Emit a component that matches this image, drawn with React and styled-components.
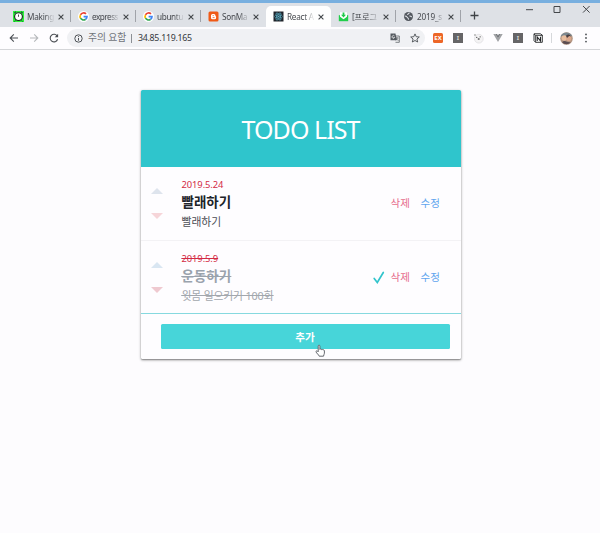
import React from "react";
import styled, { createGlobalStyle } from "styled-components";

const GlobalStyle = createGlobalStyle`
  * { box-sizing: border-box; }
  body {
    margin: 0;
    background: #fdfcfe;
    font-family: "Noto Sans", "Noto Sans CJK KR", sans-serif;
    overflow: hidden;
  }
`;

const Window = styled.div`
  width: 600px;
  height: 533px;
  display: flex;
  flex-direction: column;
`;

const TabStrip = styled.div`
  flex: none;
  height: 27px;
  display: flex;
  padding-left: 6px;
  border-top: 3px solid #78afdf;
  background: #dee1e6;
`;

const Tab = styled.div`
  width: 65px;
  height: 21px;
  margin-top: 3px;
  padding: 0 6px 0 7px;
  display: flex;
  align-items: center;
  border-radius: 5px 5px 0 0;
  background: ${(p) => (p.$active ? "#fefefe" : "transparent")};
`;

const TabIcon = styled.svg`
  flex: none;
  width: 11px;
  height: 11px;
`;

const TabLabel = styled.span`
  width: 28px;
  margin-left: 3px;
  flex: none;
  white-space: nowrap;
  font-size: 8.2px;
  line-height: 14px;
  letter-spacing: ${(p) => p.$tracking || "-0.4px"};
  color: #45484d;
  mask-image: linear-gradient(90deg, #000 60%, rgba(0, 0, 0, 0.15) 92%);
`;

const CloseIcon = styled.svg`
  width: 6px;
  height: 6px;
  margin-left: 3px;
  flex: none;
`;

const Divider = styled.span`
  flex: none;
  width: 1px;
  height: 12px;
  margin: 7px 0 0 -1px;
  background: ${(p) => (p.$hidden ? "transparent" : "#a0a3a9")};
`;

const NewTab = styled.svg`
  width: 9px;
  height: 9px;
  margin: 8px 0 0 9px;
`;

const WindowControls = styled.div`
  display: flex;
  margin-left: auto;
  height: 12px;
`;

const ControlIcon = styled.svg`
  width: 28.5px;
  height: 12px;
`;

const Toolbar = styled.div`
  flex: none;
  height: 23px;
  display: flex;
  align-items: center;
  padding-left: 4px;
  background: #fefdff;
  border-bottom: 1px solid #d5d6d9;
`;

const ToolCell = styled.span`
  width: 20px;
  height: 20px;
  display: flex;
  align-items: center;
  justify-content: center;
  flex: none;
`;

const AddressBar = styled.div`
  width: 358px;
  height: 18px;
  margin: 0 3px 0 3px;
  padding-left: 7px;
  display: flex;
  align-items: center;
  border-radius: 9px;
  background: #f0f1f4;
  font-size: 8.8px;
  line-height: 14px;
  color: #35383d;
`;

const Warning = styled.span`
  width: 38px;
  margin-left: 5px;
  font-size: 9.8px;
  letter-spacing: -0.1px;
  white-space: nowrap;
  color: #70747a;
`;

const Pipe = styled.span`
  width: 1px;
  height: 9px;
  margin: 0 6px 0 5px;
  background: #8b8f94;
`;

const Address = styled.span`
  letter-spacing: -0.27px;
  flex: 1;
`;

const Extension = styled.span`
  width: 10px;
  height: 10px;
  display: flex;
  align-items: center;
  justify-content: center;
  border-radius: ${(p) => (p.$round ? "1.5px" : "0")};
  background: ${(p) => p.$color};
  color: ${(p) => (p.$round ? "#fff" : "#d5d5d5")};
  font: 700 6px/10px "Noto Sans", sans-serif;
`;

const Separator = styled.span`
  width: 1px;
  height: 10px;
  margin: 0 4px 0 3px;
  background: #d6d8db;
`;

const Page = styled.main`
  flex: 1;
  display: flex;
  justify-content: center;
  align-items: flex-start;
  padding: 40px 0 0 1px;
`;

const Card = styled.section`
  width: 320px;
  height: 268.5px;
  border-radius: 1.5px;
  overflow: visible;
  background: #fefdff;
  box-shadow: 0 1px 3px rgba(0, 0, 0, 0.32), 0 1px 1.5px rgba(0, 0, 0, 0.3);
`;

const CardHeader = styled.h1`
  margin: 0;
  height: 77px;
  display: flex;
  align-items: center;
  justify-content: center;
  border-radius: 1.5px 1.5px 0 0;
  background: #2fc5cc;
  color: #fff;
  font: 400 25px/34px "Noto Sans", sans-serif;
  letter-spacing: -0.95px;
`;

const TodoList = styled.div`
  height: 147px;
  border-bottom: 1px solid #86d9df;
`;

const TodoRow = styled.article`
  height: 74px;
  display: flex;
  align-items: flex-start;
  padding: 0 20px 0 10px;

  & + & {
    height: 72px;
  }
  &:first-child {
    border-bottom: 1px solid #f3f2f5;
  }
`;

const Sorter = styled.div`
  width: 31px;
  padding-top: 21px;
  display: flex;
  flex-direction: column;
  gap: 19px;
`;

const Arrow = styled.svg`
  display: block;
  width: 12px;
  height: 6px;
`;

const TodoBody = styled.div`
  flex: 1;
  padding-top: 11px;
  text-decoration: ${(p) => (p.$done ? "line-through" : "none")};
  color: ${(p) => (p.$done ? "#9aa3ad" : "#20242a")};
`;

const TodoDate = styled.div`
  height: 14px;
  font-size: 9.4px;
  line-height: 14px;
  letter-spacing: -0.08px;
  color: #d32a45;
  text-decoration: inherit;
`;

const TodoTitle = styled.div`
  height: 21px;
  font-size: 13.5px;
  line-height: 20px;
  font-weight: 700;
  text-decoration: inherit;
`;

const TodoText = styled.div`
  height: 18px;
  font-size: 10.8px;
  line-height: 18px;
  letter-spacing: ${(p) => (p.$done ? "-0.15px" : "0")};
  color: ${(p) => (p.$done ? "#a2a7ad" : "#4c4e55")};
  text-decoration: inherit;
`;

const Actions = styled.div`
  display: flex;
  align-items: center;
  padding-top: 27px;
  font-size: 10.5px;
  line-height: 18px;
`;

const Check = styled.svg`
  width: 12px;
  height: 13px;
  margin: 0 6px 0 0;
`;

const Action = styled.span`
  width: 20px;
  margin-left: ${(p) => (p.$edit ? "10px" : "0")};
  color: ${(p) => (p.$edit ? "#61a5ee" : "#e66c8c")};
  white-space: nowrap;
`;

const CardFooter = styled.div`
  padding: 10px 10px 0 20px;
`;

const AddButton = styled.button`
  display: block;
  position: relative;
  width: 289px;
  height: 25px;
  padding: 0;
  border: 0;
  border-radius: 1.5px;
  background: #47d5d9;
  color: #fff;
  font: 700 10.6px/24px "Noto Sans CJK KR", sans-serif;
  text-align: center;
`;

const Pointer = styled.svg`
  position: absolute;
  left: 154px;
  top: 20px;
  width: 11px;
  height: 14px;
`;

const GoogleMark = () => (
  <>
    <circle cx="5.5" cy="5.5" r="5.5" fill="#fff" />
    <g fill="none" strokeWidth="1.7">
      <path d="M8 2.9A3.5 3.5 0 0 0 2.5 3.8" stroke="#ea4335" />
      <path d="M2.5 3.8A3.5 3.5 0 0 0 2.5 7.2" stroke="#fbbc05" />
      <path d="M2.5 7.2A3.5 3.5 0 0 0 7.6 8.3" stroke="#34a853" />
      <path d="M7.6 8.3A3.5 3.5 0 0 0 9 5.6H5.6" stroke="#4285f4" />
    </g>
  </>
);

const marks = {
  clock: (
    <>
      <path d="M0 0h11v11H0z" fill="#2cf238" />
      <path d="M1.2 2 3 .8M9.8 2 8 .8M2.4 9.5l-.8 1M8.6 9.5l.8 1" stroke="#123" strokeWidth="1" />
      <circle cx="5.5" cy="5.6" r="3.9" fill="#fff" stroke="#17251b" strokeWidth="1.1" />
      <path d="M5.5 3.5v2.3" stroke="#222" strokeWidth=".8" />
    </>
  ),
  google: <GoogleMark />,
  blogger: (
    <>
      <rect x=".5" y=".5" width="10" height="10" rx="1.5" fill="#f05a16" />
      <path d="M3 4.5a1.6 1.6 0 0 1 1.6-1.6h1.2c1.2 0 1.7.8 1.7 1.9 0 .5.6.4.6 1v.9a1.6 1.6 0 0 1-1.6 1.6H4.6A1.6 1.6 0 0 1 3 6.7z" fill="#fff" />
      <path d="M4.6 4.6h1.2M4.6 6.6h2" stroke="#f05a16" strokeWidth=".8" />
    </>
  ),
  react: (
    <>
      <path d="M.5.5h10v10H.5z" fill="#20242b" />
      <g fill="none" stroke="#5bb5cd" strokeWidth=".6">
        <ellipse cx="5.5" cy="5.5" rx="4.1" ry="1.6" />
        <ellipse cx="5.5" cy="5.5" rx="4.1" ry="1.6" transform="rotate(60 5.5 5.5)" />
        <ellipse cx="5.5" cy="5.5" rx="4.1" ry="1.6" transform="rotate(120 5.5 5.5)" />
      </g>
      <circle cx="5.5" cy="5.5" r=".8" fill="#5bb5cd" />
    </>
  ),
  mail: (
    <>
      <path d="M.8 4.2h9.4v6H.8z" fill="#21ce4b" />
      <path d="M2 1.200h7v4.600L5.500 8.300 2 5.800z" fill="#fff" />
      <path d="M4.600 1.500h1.800v2.200h1.600L5.500 6.400 3 3.700h1.600z" fill="#20c94b" />
    </>
  ),
  globe: (
    <>
      <circle cx="5.5" cy="5.5" r="4.5" fill="#52575e" />
      <path d="M1.7 5c1.4 0 2 .4 2.5 1.2S5.7 7 5.500 8.600M6.400 1.700c-.2 1.400-1.800.8-1.800 2.200M6.500 4.900c1 .1 1.300 1 2.500.8" fill="none" stroke="#dee1e6" strokeWidth="1.1" />
    </>
  ),
};

const tabs = [
  { mark: "clock", label: "Making", tracking: "-0.25px" },
  { mark: "google", label: "express", tracking: "-0.5px" },
  { mark: "google", label: "ubuntu", tracking: "-0.35px" },
  { mark: "blogger", label: "SonMa", noDivider: true, tracking: "-0.25px" },
  { mark: "react", label: "React A", active: true, noDivider: true, tracking: "-0.25px" },
  { mark: "mail", label: "[프로그", tracking: "-0.1px" },
  { mark: "globe", label: "2019_s", tracking: "-0.2px" },
];

const todos = [
  { date: "2019.5.24", title: "빨래하기", text: "빨래하기", done: false },
  { date: "2019.5.9", title: "운동하기", text: "윗몸 일으키기 100회", done: true },
];

const ToolIcon = ({ size = 10, children }) => (
  <svg width={size} height={size} viewBox="0 0 10 10" fill="none" stroke="#4b4f54" strokeWidth="1.1">
    {children}
  </svg>
);

function Tabs() {
  return (
    <TabStrip>
      {tabs.map((t, i) => (
        <React.Fragment key={i}>
          <Tab $active={t.active}>
            <TabIcon viewBox="0 0 11 11">{marks[t.mark]}</TabIcon>
            <TabLabel $tracking={t.tracking}>{t.label}</TabLabel>
            <CloseIcon viewBox="0 0 6 6">
              <path d="M.6.6l4.8 4.8M5.4.6.6 5.4" stroke="#414549" strokeWidth="1.1" />
            </CloseIcon>
          </Tab>
          <Divider $hidden={t.noDivider} />
        </React.Fragment>
      ))}
      <NewTab viewBox="0 0 9 9">
        <path d="M4.5.5v8M.5 4.5h8" stroke="#3f4347" strokeWidth="1.3" />
      </NewTab>
      <WindowControls>
        <ControlIcon viewBox="0 0 28.5 12"><path d="M11 6.7h7" stroke="#44474b" /></ControlIcon>
        <ControlIcon viewBox="0 0 28.5 12"><path d="M11 3.5h6v6h-6z" fill="none" stroke="#44474b" /></ControlIcon>
        <ControlIcon viewBox="0 0 28.5 12"><path d="m11 3 6.6 6.6m0-6.6L11 9.6" stroke="#44474b" /></ControlIcon>
      </WindowControls>
    </TabStrip>
  );
}

function BrowserToolbar() {
  return (
    <Toolbar>
      <ToolCell><ToolIcon><path d="M9 5H1.3M4.8 1.4 1.2 5l3.6 3.6" /></ToolIcon></ToolCell>
      <ToolCell><ToolIcon><path d="M1 5h7.7M5.2 1.4 8.8 5 5.2 8.6" stroke="#b5b8bb" /></ToolIcon></ToolCell>
      <ToolCell>
        <ToolIcon>
          <path d="M8.3 3.2A3.8 3.8 0 1 0 8.6 6.3" />
          <path d="M9.1.8v3.4H5.7z" fill="#4b4f54" stroke="none" />
        </ToolIcon>
      </ToolCell>
      <AddressBar>
        <ToolIcon size={9}>
          <circle cx="5" cy="5" r="4.1" />
          <path d="M5 4.4v3M5 2.4v1" />
        </ToolIcon>
        <Warning>주의 요함</Warning>
        <Pipe />
        <Address>34.85.119.165</Address>
        <ToolCell>
          <ToolIcon>
            <path d="M.5.5h5l1.2 6.7H.5z" fill="#555a60" stroke="none" />
            <path d="M4.5 3h4.8v6.3H5.5" strokeWidth=".7" />
            <path d="M5.7 5H8.5M7 4.3c0 1.8-.6 2.4-1.2 3M6.4 5.8l2 2" strokeWidth=".7" />
            <path d="M4.5 3A1.4 1.4 0 1 0 4.7 4.4H3.3" stroke="#fff" strokeWidth=".7" />
          </ToolIcon>
        </ToolCell>
        <ToolCell>
          <ToolIcon><path d="m5 .9 1.2 2.8 3.1.3-2.4 2 .8 3L5 7.5 2.3 9l.8-3L.7 4l3.1-.3z" strokeWidth=".9" /></ToolIcon>
        </ToolCell>
      </AddressBar>
      <ToolCell><Extension $round $color="#ed6628">EX</Extension></ToolCell>
      <ToolCell><Extension $color="#666567">I</Extension></ToolCell>
      <ToolCell>
        <ToolIcon size={11}>
          <circle cx="5.3" cy="5.2" r="4" fill="#f4f3f4" stroke="#d6d5d8" strokeWidth=".5" />
          <circle cx="1.8" cy="1.8" r="1" fill="#bbb" stroke="none" />
          <circle cx="3.4" cy="4" r=".6" fill="#555" stroke="none" />
          <circle cx="6.5" cy="3.5" r=".6" fill="#555" stroke="none" />
          <ellipse cx="5.2" cy="5.5" rx="1" ry=".7" fill="#444" stroke="none" />
        </ToolIcon>
      </ToolCell>
      <ToolCell>
        <ToolIcon>
          <path d="M.3 1h2L5 5.6 7.7 1h2L5 9z" fill="#a0a2a5" stroke="none" />
          <path d="M2.3 1h1.8L5 2.6 5.9 1h1.8L5 5.6z" fill="#777a7e" stroke="none" />
        </ToolIcon>
      </ToolCell>
      <ToolCell><Extension $color="#666567">I</Extension></ToolCell>
      <ToolCell>
        <ToolIcon>
          <path d="M1 .8h6.3L9.3 2v7.3H2.5L1 7.6z" fill="#fff" stroke="#202124" strokeWidth=".9" />
          <path d="M1 1.1 2.6 2.4h6.6M2.6 2.4v6.8" stroke="#202124" strokeWidth=".8" />
          <path d="M4.2 7.9V4l3.3 3.9V3.8" stroke="#202124" />
        </ToolIcon>
      </ToolCell>
      <Separator />
      <ToolCell>
        <svg width="13" height="13" viewBox="0 0 13 13">
          <circle cx="6.5" cy="6.5" r="6.3" fill="#b59682" />
          <path d="M.8 4A6.3 6.3 0 0 1 12.2 4L8 3.5 4 6z" fill="#7b8890" />
          <circle cx="4.2" cy="6" r="2.7" fill="#e8bd9e" />
          <circle cx="8.7" cy="6.4" r="2.6" fill="#dda88c" />
          <path d="M6 3.8q3-2.8 5 .6L9.2 4.1 7 6z" fill="#4a3d3f" />
          <path d="M2 10.300Q4 7.800 7 9.800l3.800.8A6.300 6.300 0 0 1 2 10.300z" fill="#5b4d52" />
        </svg>
      </ToolCell>
      <ToolCell>
        <ToolIcon>
          <g fill="#4b4f54" stroke="none">
            <circle cx="5" cy="1.4" r=".9" /><circle cx="5" cy="5" r=".9" /><circle cx="5" cy="8.6" r=".9" />
          </g>
        </ToolIcon>
      </ToolCell>
    </Toolbar>
  );
}

function Todo({ date, title, text, done }) {
  return (
    <TodoRow>
      <Sorter>
        <Arrow viewBox="0 0 12 6"><path d="M0 6 6 0l6 6z" fill={done ? "#d9e6f2" : "#dee4ed"} /></Arrow>
        <Arrow viewBox="0 0 12 6"><path d="M0 0h12L6 6z" fill={done ? "#efc9d0" : "#f6d5d9"} /></Arrow>
      </Sorter>
      <TodoBody $done={done}>
        <TodoDate>{date}</TodoDate>
        <TodoTitle>{title}</TodoTitle>
        <TodoText $done={done}>{text}</TodoText>
      </TodoBody>
      <Actions>
        {done && (
          <Check viewBox="0 0 12 13">
            <path d="M1.2 7.4 4.3 11.4 10.3 1.5" fill="none" stroke="#32c4cc" strokeWidth="1.7" strokeLinecap="round" />
          </Check>
        )}
        <Action>삭제</Action>
        <Action $edit>수정</Action>
      </Actions>
    </TodoRow>
  );
}

export default function App() {
  return (
    <Window>
      <GlobalStyle />
      <Tabs />
      <BrowserToolbar />
      <Page>
        <Card>
          <CardHeader>TODO LIST</CardHeader>
          <TodoList>
            {todos.map((t) => <Todo key={t.date} {...t} />)}
          </TodoList>
          <CardFooter>
            <AddButton>
              추가
              <Pointer viewBox="0 0 11 14">
                <path
                  d="M3.2 7.8V2.2c0-1.5 1.7-1.5 1.7 0v3.2c.4-.8 1.6-.6 1.6.3.4-.6 1.5-.4 1.5.4.5-.5 1.4-.2 1.4.7v2.4c0 1-.8 1.6-.9 3H4.2C3.8 10.7 1.5 9.3 1 7.8c-.1-.9.9-1.3 1.5-.7z"
                  fill="#fff" stroke="#55585f" strokeWidth=".9"
                />
              </Pointer>
            </AddButton>
          </CardFooter>
        </Card>
      </Page>
    </Window>
  );
}
